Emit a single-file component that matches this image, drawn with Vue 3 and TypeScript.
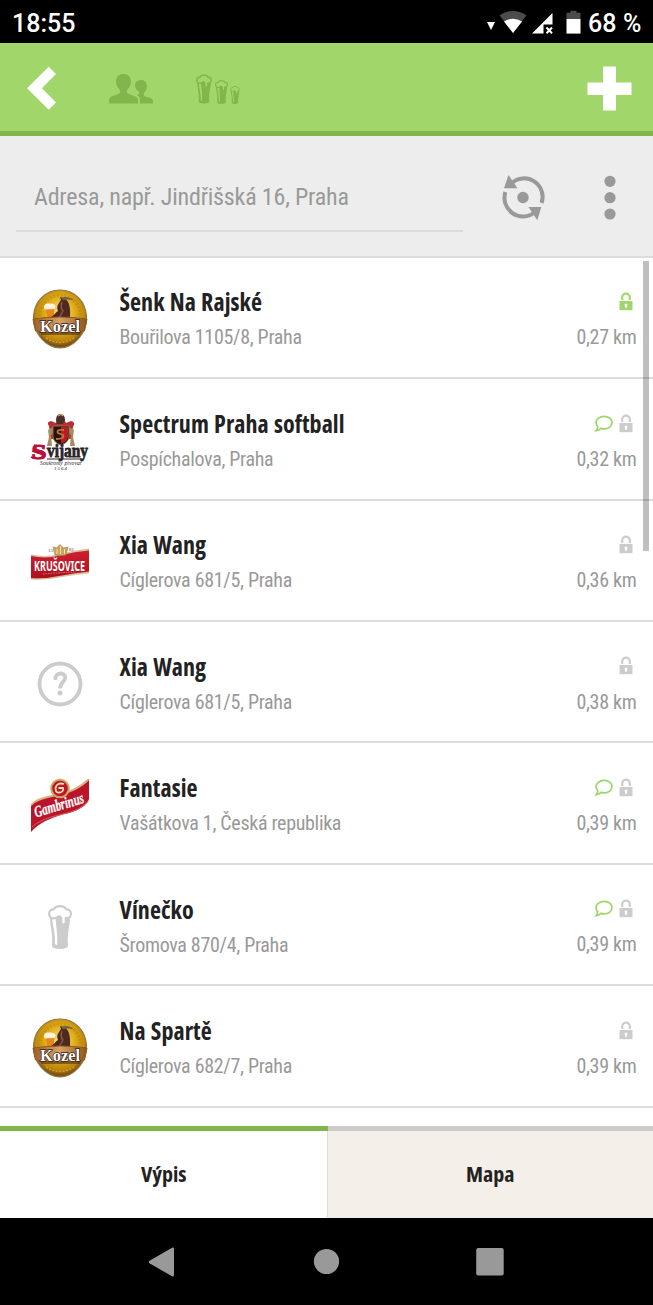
<script setup lang="ts">
interface Pub {
  name: string
  address: string
  distance: string
  logo: 'kozel' | 'svijany' | 'krusovice' | 'unknown' | 'gambrinus' | 'beer'
  unlocked?: boolean
  comment?: boolean
}

const pubs: Pub[] = [
  { name: 'Šenk Na Rajské', address: 'Bouřilova 1105/8, Praha', distance: '0,27 km', logo: 'kozel', unlocked: true },
  { name: 'Spectrum Praha softball', address: 'Pospíchalova, Praha', distance: '0,32 km', logo: 'svijany', comment: true },
  { name: 'Xia Wang', address: 'Cíglerova 681/5, Praha', distance: '0,36 km', logo: 'krusovice' },
  { name: 'Xia Wang', address: 'Cíglerova 681/5, Praha', distance: '0,38 km', logo: 'unknown' },
  { name: 'Fantasie', address: 'Vašátkova 1, Česká republika', distance: '0,39 km', logo: 'gambrinus', comment: true },
  { name: 'Vínečko', address: 'Šromova 870/4, Praha', distance: '0,39 km', logo: 'beer', comment: true },
  { name: 'Na Spartě', address: 'Cíglerova 682/7, Praha', distance: '0,39 km', logo: 'kozel' },
]
</script>

<template>
  <div class="screen">
    <svg class="defs" width="0" height="0" aria-hidden="true">
      <defs>
        <radialGradient id="gold" cx="50%" cy="40%" r="56%">
          <stop offset="0" stop-color="#fbe78f" />
          <stop offset="0.5" stop-color="#e0ad18" />
          <stop offset="0.85" stop-color="#bd8509" />
          <stop offset="1" stop-color="#7d5010" />
        </radialGradient>
        <linearGradient id="band" x1="0" x2="1" y1="0" y2="0">
          <stop offset="0" stop-color="#9b5f22" />
          <stop offset="0.5" stop-color="#d6a265" />
          <stop offset="1" stop-color="#8e541f" />
        </linearGradient>
        <linearGradient id="red" x1="0" x2="0" y1="0" y2="1">
          <stop offset="0" stop-color="#d0202f" />
          <stop offset="1" stop-color="#a9101f" />
        </linearGradient>
        <symbol id="glass" viewBox="0 0 24 44">
          <path d="M2 12C2 22 5.200 28 4 40.500Q4 43.900 12 43.900T20 40.500C18.800 28 22 22 22 12z" fill="currentColor" />
          <path d="M4.200 13.500H7.600C8 22 9.800 28 9.200 40L7 39.300C7.400 28 4.800 22 4.200 13.500z" fill="var(--gap)" />
          <path d="M6.500 13.200C2.800 14.200 1.100 11.500 1.100 8.800C1.100 5.900 3 4.200 5.600 4.500C6.800 1.900 9 1.100 12 1.100S17.200 1.900 18.400 4.500C21 4.200 22.900 5.900 22.900 8.800C22.900 11.500 21.200 13.600 17.800 13V17.500Q17.500 19.500 15.500 19.500T13.200 17.500V13Q11.500 10.300 9.500 12Q8 13.300 6.500 13.200z" fill="var(--gap)" stroke="currentColor" stroke-width="2.200" />
        </symbol>
      </defs>
    </svg>

    <header class="status">
      <span class="clock">18:55</span>
      <svg class="status-icons" width="96" height="28" viewBox="0 0 96 28">
        <path d="M1 13h8l-4 8z" fill="#fff" />
        <path d="M13.500 6.300Q27-2.500 40.500 6.300L27 24z" fill="#4c4c4c" />
        <path d="M18 12.500Q27 7 36 12.500L27 24z" fill="#fff" />
        <path d="M66.500 4V15.500H57.500V24.500H46z" fill="#fff" />
        <path d="M60.500 18.500l5.500 5.700m0-5.700l-5.500 5.700" stroke="#fff" stroke-width="2" />
        <path d="M84.500 1.800h6v2h4V10h-14V3.800h4z" fill="#4c4c4c" />
        <path d="M80.500 10h14v14.600h-14z" fill="#fff" />
      </svg>
      <span class="battery">68 %</span>
    </header>

    <nav class="appbar">
      <svg class="back" width="30" height="44" viewBox="0 0 30 44"><path d="M21.700 .7L29 8 14.900 22.200 29 36.500 21.700 43.800 0 22.200z" fill="#fff" /></svg>
      <svg class="people" width="45" height="30" viewBox="0 0 45 30">
        <path d="M31 29.500v-3.500c0-2.800-1.300-4-3-5.200 2-.5 2.600-1.300 2-2.800C27.500 16 26 14 26 11.800 26 8.300 28.500 6 32 6s6 2.400 6 6.200c0 2.600-1.200 4.600-2.600 6.400-1 1.400-1.100 3 .6 3.700 3.600 1.500 8 1.500 8 5.200v2z" fill="currentColor" />
        <path d="M0 29.500v-2.800C0 22 5 21.800 9.500 20c2.400-1 2-3 .8-4.700C8.500 13 7 10.500 7 7.500 7 3 10 0 14.500 0S22 3 22 7.500c0 3-1.500 5.500-3.200 7.800-1.200 1.700-1.600 3.700.8 4.700 4.500 1.800 9.500 2 9.500 6.700v2.800z" fill="currentColor" />
      </svg>
      <div class="glasses">
        <svg width="16" height="30"><use href="#glass" /></svg>
        <svg width="13" height="24"><use href="#glass" /></svg>
        <svg width="10" height="18"><use href="#glass" /></svg>
      </div>
      <svg class="plus" width="45" height="45" viewBox="0 0 45 45"><path d="M16 .5h13v16h15.500v12.500H29v15.500H16V29H.5V16.500H16z" fill="#fff" /></svg>
    </nav>

    <section class="search">
      <div class="field">Adresa, např. Jindřišská 16, Praha</div>
      <svg class="locate" width="44" height="46" viewBox="0 0 44 46">
        <g fill="none" stroke="#999" stroke-width="4">
          <path d="M9.500 8.200A18.600 18.600 0 0 1 39.600 28" />
          <path d="M3.400 17A18.600 18.600 0 0 0 32.500 37.500" />
        </g>
        <path d="M6.500 0L15.500 13.300H2zM39.300 32H26.500L35.300 45.300z" fill="#999" />
        <circle cx="21" cy="22.500" r="5.700" fill="#999" />
      </svg>
      <svg class="more" width="12" height="46" viewBox="0 0 12 46" fill="#999">
        <circle cx="6" cy="6.300" r="5.600" /><circle cx="6" cy="22.700" r="5.600" /><circle cx="6" cy="39" r="5.600" />
      </svg>
    </section>

    <main class="list">
      <article v-for="(pub, i) in pubs" :key="i" class="row">
        <div class="logo">
          <svg v-if="pub.logo === 'kozel'" width="60" height="60" viewBox="0 0 60 60">
            <path d="M30 1C45 1 56 13 56.500 28C57 45 43 59 30 59S3 45 3.500 28C4 13 15 1 30 1z" fill="url(#gold)" stroke="#8e7544" stroke-width="1.200" />
            <path d="M9.500 27A20.500 20.500 0 0 1 50.500 27" fill="none" stroke="#a87a0c" stroke-width="3" stroke-dasharray="2 1.600" opacity=".35" />
            <path d="M16 49Q30 58 44 49" fill="none" stroke="#e5bc53" stroke-width="1.500" stroke-dasharray="2 1.500" opacity=".6" />
            <path d="M23 31q1-7 5-9-2-4 1-8l2-3-1-3 5 2q6 3 5 19l-3 4z" fill="#4d291e" />
            <path d="M31 8.500q8-2 13 3-6-2-11 0z" fill="#6d604b" />
            <path d="M32 13q-2 6 1 9-2 4-5 8" fill="none" stroke="#8c5746" stroke-width="1.500" />
            <path d="M15 17l10-1-1.500 12q-3 2-6 0z" fill="#e6861b" />
            <path d="M14 18q0-4 5-3.500 6-.5 6.500 3l-1 2.500-10 .5z" fill="#fff2dc" />
            <path d="M22 29q5-4 8-5" stroke="#4d291e" stroke-width="2.500" />
            <path d="M3 30q27-4 54 0l-2.500 12q-24 4-49 0z" fill="url(#band)" stroke="#915820" />
            <text x="10" y="43.300" textLength="40" lengthAdjust="spacingAndGlyphs" class="kozel-text">Kozel</text>
            <path d="M11 45h39" stroke="#38231a" stroke-width="1.200" />
          </svg>
          <svg v-else-if="pub.logo === 'svijany'" width="60" height="60" viewBox="0 0 60 60">
            <path d="M19 15q-3-4 2-5l5 2 2-4 6 0 2 4 5-2q5 1 2 6l-2 12H21z" fill="#b72c37" />
            <path d="M18 19l7-4 1 5-5 4 1 11h-5l2-9zM44 19l-7-4-1 5 5 4-1 11h5l-2-9z" fill="#a98a64" />
            <path d="M26 10q0-7 4-7 5 0 5 6l-2 4h-6z" fill="#4a302c" />
            <path d="M28 5q3-3 5 0" fill="none" stroke="#c5a477" stroke-width="1.500" />
            <path d="M23 15h16v11q-1 6-8 8-7-2-8-8z" fill="#211614" stroke="#9b712e" />
            <path d="M31 16h7v10q-1 5-7 7z" fill="#b21f27" />
            <path d="M34 19q-8-1-6 3l5 2q2 4-7 4" fill="none" stroke="#c9722f" stroke-width="1.800" />
            <text x="1.500" y="48" class="svijany-text" fill="#bd0e35" stroke="#bd0e35" stroke-width="1" font-size="20" textLength="15" lengthAdjust="spacingAndGlyphs">S</text>
            <path d="M2 40l12 4M4 34l10 2M1 46q5 3 12 0" stroke="#bd0e35" stroke-width="1.500" fill="none" />
            <text x="17" y="45.500" class="svijany-text" fill="#292425" stroke="#292425" stroke-width=".8" font-size="19" textLength="41" lengthAdjust="spacingAndGlyphs">vijany</text>
            <path d="M17 48h36" stroke="#292425" stroke-width="1" />
            <text x="10" y="54" class="script" font-size="5.500" fill="#222" textLength="42">Soukromý pivovar</text>
            <text x="24" y="58.500" class="script" font-size="5" fill="#222" textLength="13">1564</text>
          </svg>
          <svg v-else-if="pub.logo === 'krusovice'" width="60" height="60" viewBox="0 0 60 60">
            <path d="M1 22.500Q16 25.500 30 22Q45 18 59 16.500V41.500Q45 42.500 32 45Q16 48.500 1 47.500z" fill="#d9c09a" />
            <path d="M1 24Q16 27 30 23.500Q45 19.500 59 18.500V39.500Q45 41 32 43.500Q16 47 1 46z" fill="url(#red)" />
            <path d="M25 23l-2-8 3.500 1L30 12.500l3.500 3.500 4.500-1-2 8q-5 1.500-11 0z" fill="#caa263" stroke="#a87838" stroke-width=".6" />
            <path d="M27 22v-5m3.500 5v-8m4 8v-5" stroke="#f3dfb6" stroke-width="1" />
            <text x="18" y="20" font-size="5" fill="#444" class="serif-logo" textLength="5">15</text>
            <text x="39" y="18.500" font-size="5" fill="#444" class="serif-logo" textLength="5">81</text>
            <text x="4" y="38.500" class="krusovice-text" textLength="51" lengthAdjust="spacingAndGlyphs">KRUŠOVICE</text>
            <path d="M13 42q17-1.500 33-2" fill="none" stroke="#d97679" stroke-dasharray="1.500 1" />
          </svg>
          <svg v-else-if="pub.logo === 'gambrinus'" width="60" height="60" viewBox="0 0 60 60">
            <path d="M1 31Q6 24 22 21Q46 17 59 4V24Q56 33 39 38Q12 44 1 57z" fill="#b91429" />
            <path d="M1 30Q6 24 22 21Q46 17 58.500 4.500" fill="none" stroke="#d9b27c" stroke-width="1.800" />
            <path d="M2 52Q10 44 31 39.500Q50 36 58.500 26" fill="none" stroke="#dc6864" stroke-width=".9" />
            <circle cx="30" cy="13.500" r="8.800" fill="#ba172b" stroke="#d1a75f" stroke-width="2" />
            <path d="M34 9q-7-2-8.500 4 0 5.500 4.500 4.500 4-1 3-4.500h-4.500" fill="none" stroke="#ffe0b3" stroke-width="1.800" />
            <text x="6" y="42.500" transform="rotate(-17 6 42.500)" class="gambrinus-text" textLength="51" lengthAdjust="spacingAndGlyphs">Gambrinus</text>
          </svg>
          <svg v-else-if="pub.logo === 'unknown'" width="60" height="60" viewBox="0 0 60 60">
            <circle cx="30" cy="30" r="20.500" fill="none" stroke="#ccc" stroke-width="3.800" />
            <path d="M25.400 26C24 18 35.200 17.500 35.200 23.700C35.200 28 30.200 28 30.200 34.500" fill="none" stroke="#ccc" stroke-width="3.800" />
            <circle cx="30" cy="39" r="2.500" fill="#ccc" />
          </svg>
          <svg v-else class="beer" width="24" height="44"><use href="#glass" /></svg>
        </div>
        <div class="details">
          <h2 class="name">{{ pub.name }}</h2>
          <p class="address">{{ pub.address }}</p>
        </div>
        <div class="meta">
          <div class="flags">
            <svg v-if="pub.comment" width="18" height="19" viewBox="0 0 18 19"><path d="M9.300 2.300C13.700 2.300 17 5 17 8.600S13.700 14.900 9.300 14.900Q7.600 14.900 6 14.400Q4 16.500 1.200 16.600Q2.900 15 2.700 12.500Q1 11 1 8.600C1 5 5 2.300 9.300 2.300z" fill="none" stroke="#9bd668" stroke-width="1.700" /></svg>
            <svg class="lock" :class="{ open: pub.unlocked }" width="14" height="19" viewBox="0 0 14 19">
              <path d="M3.200 8V5.500a3.800 3.800 0 0 1 7.600 0V8" fill="none" stroke="currentColor" stroke-width="2.200" />
              <path d="M.5 9h13v9.200H.5z" fill="currentColor" />
              <path d="M5.700 11.800h2.600v2l-.6 2.200H6.600L5.700 13.800z" fill="#fff" />
            </svg>
          </div>
          <span class="distance">{{ pub.distance }}</span>
        </div>
      </article>
      <div class="scrollbar"></div>
    </main>

    <footer class="tabs">
      <button class="tab active">Výpis</button>
      <button class="tab">Mapa</button>
    </footer>

    <div class="system">
      <svg width="30" height="30" viewBox="0 0 30 30"><path d="M1.500 13.700Q0 15 1.500 16.300L24 29.300Q26 30 26 28V2Q26 0 24 .7z" fill="#999" /></svg>
      <svg width="30" height="30" viewBox="0 0 30 30"><circle cx="14.500" cy="14.500" r="12.600" fill="#999" /></svg>
      <svg width="30" height="30" viewBox="0 0 30 30"><rect x="1.200" y="1" width="27.500" height="27.500" rx="2" fill="#999" /></svg>
    </div>
  </div>
</template>

<style>
body { margin: 0; background: #fff; }
</style>

<style scoped>
.screen { width: 653px; height: 1305px; display: flex; flex-direction: column; overflow: hidden; background: #fff; font-family: Roboto, "Noto Sans", sans-serif; }
svg { display: block; flex: none; overflow: visible; }
.defs { position: absolute; }
.status { height: 43.300px; flex: none; box-sizing: border-box; background: #000; color: #fff; display: flex; align-items: center; padding: 3px 12px 0; font-size: 25px; font-weight: 500; white-space: nowrap; }
.clock { flex: 1; }
.status-icons { margin: -1px 6px 0 0; }
.battery { width: 53px; letter-spacing: .1px; }
.appbar { height: 92.500px; flex: none; box-sizing: border-box; background: #a1d66b; border-bottom: 5.500px solid #82b54b; display: flex; align-items: center; padding: 2px 21px 0 27px; color: #82b54b; --gap: #a1d66b; }
.back { margin-right: 52px; }
.people { margin: 1.500px 42px 0 0; }
.glasses { flex: 1; display: flex; align-items: flex-end; gap: 2.500px; padding-top: 1.500px; }
.search { height: 122px; flex: none; box-sizing: border-box; background: #ededed; border-bottom: 2px solid #dcdcdc; display: flex; align-items: center; padding: 2px 37.500px 0 16px; }
.field { width: 447px; height: 71px; box-sizing: border-box; border-bottom: 2px solid #dcdcdc; padding: 1px 18px 0; line-height: 71px; font-size: 24px; font-stretch: 75%; letter-spacing: -.19px; color: #999; white-space: nowrap; }
.locate { margin: 2px 0 0 38.500px; }
.more { margin: 2px 0 0 auto; }
.list { flex: 1; min-height: 0; overflow: hidden; position: relative; }
.row { height: 121.430px; box-sizing: border-box; border-bottom: 2px solid #dcdcdc; display: flex; padding: 0 16.500px 0 30px; }
.logo { width: 60px; height: 60px; margin: 31.700px 29.500px 0 0; display: flex; align-items: center; justify-content: center; }
.beer { color: #ccc; --gap: #fff; }
.details { flex: 1; padding-top: 27.600px; white-space: nowrap; }
.name { margin: 0; font: 700 24px/34px "Open Sans", sans-serif; font-stretch: 75%; letter-spacing: .06px; word-spacing: .8px; color: #222; }
.address { margin: 0; font-size: 20px; line-height: 36px; font-stretch: 75%; letter-spacing: -.31px; color: #999; }
.meta { display: flex; flex-direction: column; align-items: flex-end; padding-top: 34.400px; }
.flags { height: 27.200px; display: flex; gap: 6px; padding-right: 3.500px; }
.lock { color: #ccc; }
.lock.open { color: #a1d66b; }
.distance { font-size: 20px; line-height: 36px; font-stretch: 75%; letter-spacing: -.3px; color: #999; white-space: nowrap; }
.scrollbar { position: absolute; top: 3px; right: 4px; width: 6px; height: 290px; background: rgba(0, 0, 0, .25); }
.tabs { height: 92.500px; flex: none; display: flex; }
.tab { flex: 1; box-sizing: border-box; border: 0; border-top: 5.500px solid #ccc; padding: 0 0 3px; background: #f4efe8; font: 700 22px "Open Sans", sans-serif; font-stretch: 75%; color: #222; }
.tab.active { flex: 0 0 327.500px; background: #fff; border-top-color: #82b54b; box-shadow: inset -1px 0 #ddd; }
.system { height: 87px; flex: none; background: #000; display: flex; align-items: center; justify-content: center; gap: 133.500px; }
.kozel-text { font: 900 16px "Liberation Serif", serif; fill: #fff; stroke: #33201a; stroke-width: 1.400; paint-order: stroke; }
.svijany-text { font-family: "Liberation Serif", serif; font-weight: 700; }
.script { font-family: "Liberation Serif", serif; font-style: italic; }
.serif-logo { font-family: "Liberation Serif", serif; }
.krusovice-text { font: 700 14.500px "Noto Sans", sans-serif; fill: #fff; }
.gambrinus-text { font: italic 700 16px "Liberation Serif", serif; fill: #fff; stroke: #fff; stroke-width: .3; }
</style>
